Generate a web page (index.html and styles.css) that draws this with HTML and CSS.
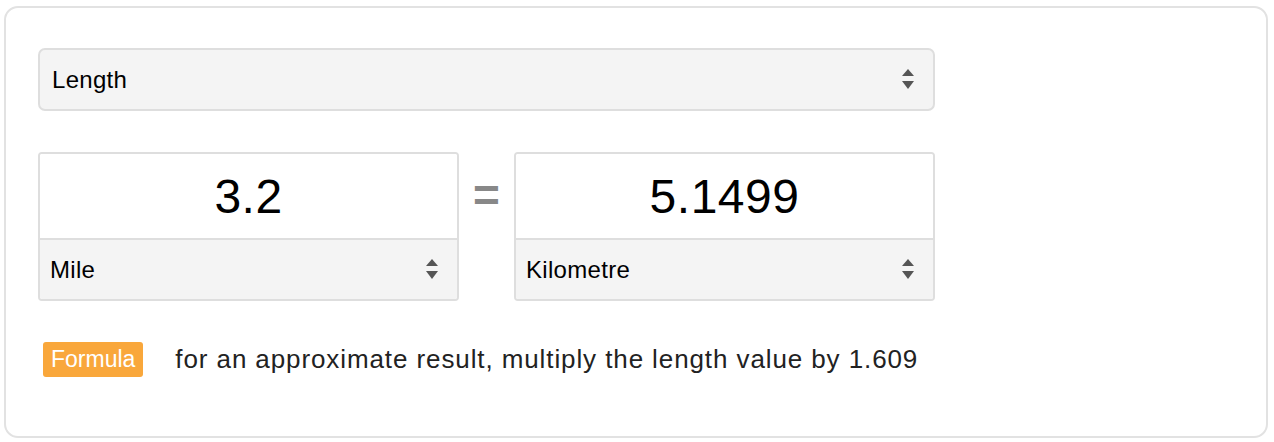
FILE: index.html
```html
<!DOCTYPE html>
<html>
<head>
<meta charset="utf-8">
<link rel="stylesheet" href="styles.css">
</head>
<body>
<div class="card">
  <div class="select select-main">
    <span class="select-label">Length</span>
    <svg class="arrows" width="14" height="24" viewBox="0 0 14 24"><path d="M1 8 L7 1 L13 8 Z" fill="#555"/><path d="M1 13 L7 21 L13 13 Z" fill="#555"/></svg>
  </div>
  <div class="converter">
    <div class="unit-box">
      <div class="value">3.2</div>
      <div class="select select-unit">
        <span class="select-label">Mile</span>
        <svg class="arrows" width="14" height="24" viewBox="0 0 14 24"><path d="M1 8 L7 1 L13 8 Z" fill="#555"/><path d="M1 13 L7 21 L13 13 Z" fill="#555"/></svg>
      </div>
    </div>
    <div class="equals">=</div>
    <div class="unit-box">
      <div class="value">5.1499</div>
      <div class="select select-unit">
        <span class="select-label">Kilometre</span>
        <svg class="arrows" width="14" height="24" viewBox="0 0 14 24"><path d="M1 8 L7 1 L13 8 Z" fill="#555"/><path d="M1 13 L7 21 L13 13 Z" fill="#555"/></svg>
      </div>
    </div>
  </div>
  <div class="formula">
    <span class="badge">Formula</span>
    <span class="formula-text">for an approximate result, multiply the length value by 1.609</span>
  </div>
</div>
</body>
</html>
```
FILE: styles.css
```css
html, body {
  margin: 0;
  padding: 0;
  background: #fff;
}
body {
  font-family: "Liberation Sans", Arial, sans-serif;
  color: #000;
}
.card {
  box-sizing: border-box;
  margin: 6px 6px 0 4px;
  height: 432px;
  border: 2px solid #e2e2e2;
  border-radius: 14px;
  padding: 40px 0 0 32px;
}
.select {
  box-sizing: border-box;
  display: flex;
  align-items: center;
  justify-content: space-between;
  background: #f4f4f4;
  border: 2px solid #dedede;
  height: 63px;
  padding: 0 18px 0 12px;
  font-size: 24px;
  letter-spacing: 0.3px;
}
.select-main {
  width: 897px;
  border-radius: 7px;
}
.arrows {
  display: block;
}
.converter {
  display: flex;
  margin-top: 41px;
  width: 897px;
}
.unit-box {
  box-sizing: border-box;
  width: 421px;
  border: 2px solid #dedede;
  border-radius: 4px;
  overflow: hidden;
  display: flex;
  flex-direction: column;
}
.value {
  height: 84px;
  display: flex;
  align-items: center;
  justify-content: center;
  font-size: 48px;
  letter-spacing: 0.5px;
  background: #fff;
}
.select-unit {
  border: none;
  border-top: 2px solid #dedede;
  height: 61px;
  padding: 0 18px 0 10px;
}
.equals {
  width: 55px;
  display: flex;
  align-items: center;
  justify-content: center;
  height: 86px;
  font-size: 46px;
  font-weight: bold;
  color: #888;
  letter-spacing: 0;
}
.formula {
  display: flex;
  align-items: center;
  margin-top: 41px;
  padding-left: 5px;
}
.badge {
  background: #f9a73b;
  color: #fff;
  font-size: 23px;
  border-radius: 3px;
  height: 35px;
  padding: 0 8px;
  display: flex;
  align-items: center;
}
.formula-text {
  margin-left: 32px;
  font-size: 26px;
  letter-spacing: 0.9px;
  color: #222;
}
```
